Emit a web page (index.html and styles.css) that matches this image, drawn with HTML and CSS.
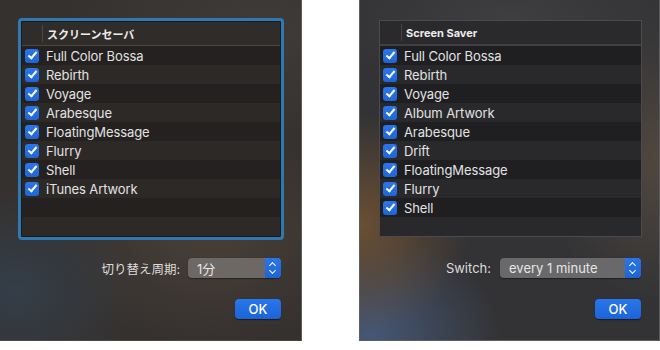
FILE: index.html
```html
<!DOCTYPE html>
<html lang="ja">
<head>
  <meta charset="UTF-8">
  <title>Screen Saver Options</title>
  <link rel="stylesheet" href="styles.css">
</head>
<body>

  <div class="sheet sheet-jp">
    <div class="list">
      <div class="list-head">
        <span class="head-check"></span>
        <span class="head-title">スクリーンセーバ</span>
      </div>
      <div class="row"><span class="check"></span>Full Color Bossa</div>
      <div class="row"><span class="check"></span>Rebirth</div>
      <div class="row"><span class="check"></span>Voyage</div>
      <div class="row"><span class="check"></span>Arabesque</div>
      <div class="row"><span class="check"></span>FloatingMessage</div>
      <div class="row"><span class="check"></span>Flurry</div>
      <div class="row"><span class="check"></span>Shell</div>
      <div class="row"><span class="check"></span>iTunes Artwork</div>
      <div class="row"></div>
      <div class="row"></div>
    </div>

    <div class="field">
      <span class="field-label">切り替え周期:</span>
      <div class="popup popup-jp">
        <span class="popup-value">1分</span>
        <span class="stepper"></span>
      </div>
    </div>

    <div class="actions">
      <button class="ok">OK</button>
    </div>
  </div>

  <div class="sheet sheet-en">
    <div class="list">
      <div class="list-head">
        <span class="head-check"></span>
        <span class="head-title">Screen Saver</span>
      </div>
      <div class="row"><span class="check"></span>Full Color Bossa</div>
      <div class="row"><span class="check"></span>Rebirth</div>
      <div class="row"><span class="check"></span>Voyage</div>
      <div class="row"><span class="check"></span>Album Artwork</div>
      <div class="row"><span class="check"></span>Arabesque</div>
      <div class="row"><span class="check"></span>Drift</div>
      <div class="row"><span class="check"></span>FloatingMessage</div>
      <div class="row"><span class="check"></span>Flurry</div>
      <div class="row"><span class="check"></span>Shell</div>
      <div class="row"></div>
    </div>

    <div class="field">
      <span class="field-label">Switch:</span>
      <div class="popup popup-en">
        <span class="popup-value">every 1 minute</span>
        <span class="stepper"></span>
      </div>
    </div>

    <div class="actions">
      <button class="ok">OK</button>
    </div>
  </div>

</body>
</html>
```

FILE: styles.css
```css
body {
  margin: 0;
  width: 660px;
  height: 350px;
  background: #fff;
  display: flex;
  align-items: flex-start;
  font-family: Inter, "Noto Sans CJK JP", sans-serif;
  color: #e2e2e2;
  overflow: hidden;
}

.sheet {
  box-sizing: border-box;
  height: 341px;
  display: flex;
  flex-direction: column;
}

.sheet-jp {
  width: 302px;
  padding: 18px 17px 0 18px;
  border-right: 1px solid #5e5b59;
  border-bottom: 1px solid #4a4846;
  background:
    radial-gradient(ellipse 120px 100px at 15px 290px, rgba(50, 78, 105, 0.45), transparent),
    radial-gradient(ellipse 160px 110px at 210px 235px, rgba(95, 80, 65, 0.45), transparent),
    radial-gradient(ellipse 200px 120px at 260px 30px, rgba(70, 66, 62, 0.6), transparent),
    #35312f;
}

.sheet-en {
  width: 301px;
  margin-left: 57px;
  padding: 20px 17px 0 19px;
  border: 1px solid #5d5d60;
  border-top: none;
  background:
    radial-gradient(ellipse 110px 110px at 0px 225px, rgba(125, 88, 50, 0.75), transparent),
    radial-gradient(ellipse 130px 100px at 10px 335px, rgba(75, 100, 140, 0.75), transparent),
    radial-gradient(ellipse 120px 140px at 300px 160px, rgba(100, 85, 70, 0.6), transparent),
    radial-gradient(ellipse 180px 80px at 150px 20px, rgba(70, 70, 72, 0.6), transparent),
    #333335;
}

/* list */

.list {
  display: flex;
  flex-direction: column;
}

.sheet-jp .list {
  border: 3px solid #2f78b2;
  border-radius: 4px;
  box-shadow: inset 0 0 0 1px #1c1a19;
  padding: 1px;
}

.sheet-en .list {
  border: 1px solid #4b4b4e;
}

.list-head {
  height: 23px;
  display: flex;
  align-items: center;
  font-size: 11px;
  font-weight: 700;
  color: #ececec;
}

.sheet-jp .list-head {
  background: #302c2a;
  border-bottom: 1px solid #4b4745;
}

.sheet-en .list-head {
  background: #2a2a2d;
  border-bottom: 2px solid #404043;
}

.head-check {
  width: 20px;
  height: 17px;
  border-right: 1px solid #4a4745;
}

.sheet-en .head-check {
  width: 21px;
  border-right-color: #444447;
}

.head-title {
  padding-left: 4px;
}

.row {
  height: 19px;
  display: flex;
  align-items: center;
  padding-left: 3px;
  font-size: 13px;
  letter-spacing: -0.1px;
}

.sheet-jp .row:nth-child(even) { background: #242120; }
.sheet-jp .row:nth-child(odd) { background: #2c2927; }
.sheet-en .row:nth-child(even) { background: #1f1f22; }
.sheet-en .row:nth-child(odd) { background: #29292c; }

.check {
  position: relative;
  width: 14px;
  height: 14px;
  margin-right: 7px;
  border-radius: 3px;
  background: linear-gradient(#2a76ea, #1f66d8);
}

.check::after {
  content: "";
  position: absolute;
  left: 4.5px;
  top: 1.5px;
  width: 3px;
  height: 7px;
  border-right: 2px solid #fff;
  border-bottom: 2px solid #fff;
  transform: rotate(40deg);
}

/* switch field */

.field {
  display: flex;
  align-items: center;
  justify-content: flex-end;
  gap: 8px;
  margin-top: 18px;
}

.sheet-jp .field,
.sheet-jp .actions {
  margin-right: 3px;
}

.sheet-en .field {
  margin-top: 21px;
  margin-right: 1px;
  gap: 9px;
}

.field-label {
  font-size: 13px;
  color: #dcdcdc;
}

.sheet-jp .field-label {
  font-size: 12.5px;
}

.popup {
  display: flex;
  align-items: center;
  justify-content: space-between;
  height: 20px;
  border-radius: 4px;
  background: #6b6866;
  box-shadow: 0 0.5px 1px rgba(0, 0, 0, 0.4);
  overflow: hidden;
}

.popup-jp { width: 93px; }
.popup-en { width: 141px; background: #69696b; }

.popup-value {
  padding-left: 9px;
  font-size: 13px;
  color: #e6e6e6;
}

.stepper {
  position: relative;
  width: 16px;
  height: 20px;
  background: linear-gradient(#2a76ea, #1c64d6);
}

.stepper::before,
.stepper::after {
  content: "";
  position: absolute;
  left: 5px;
  width: 4px;
  height: 4px;
  border-left: 1.5px solid #fff;
  border-top: 1.5px solid #fff;
}

.stepper::before {
  top: 5px;
  transform: rotate(45deg);
}

.stepper::after {
  top: 10px;
  transform: rotate(225deg);
}

/* OK */

.actions {
  display: flex;
  justify-content: flex-end;
  margin-top: 21px;
}

.sheet-en .actions {
  margin-right: 1px;
}

.ok {
  width: 46px;
  height: 20px;
  padding: 0;
  border: none;
  border-radius: 4px;
  background: linear-gradient(#2a76ec, #1b63d8);
  box-shadow: 0 0.5px 1px rgba(0, 0, 0, 0.5);
  color: #fff;
  font-family: Inter, sans-serif;
  font-size: 13px;
  font-weight: 500;
}
```
